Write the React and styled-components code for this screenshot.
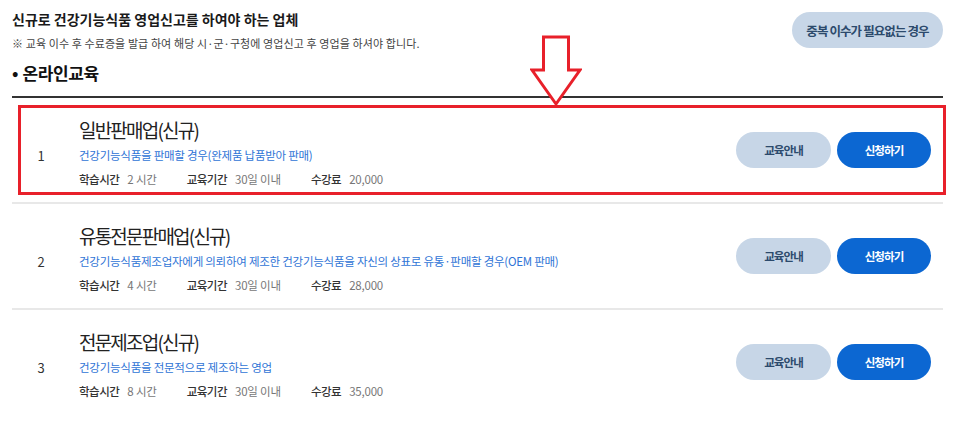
import React from 'react';
import styled, { createGlobalStyle } from 'styled-components';

const GlobalStyle = createGlobalStyle`
  body {
    margin: 0;
    background: #fff;
    font-family: "Noto Sans CJK KR", "Noto Sans", sans-serif;
    color: #222;
  }
`;

const courses = [
  {
    no: 1,
    title: '일반판매업(신규)',
    desc: '건강기능식품을 판매할 경우(완제품 납품받아 판매)',
    hours: '2 시간',
    period: '30일 이내',
    fee: '20,000',
    highlight: true,
  },
  {
    no: 2,
    title: '유통전문판매업(신규)',
    desc: '건강기능식품제조업자에게 의뢰하여 제조한 건강기능식품을 자신의 상표로 유통·판매할 경우(OEM 판매)',
    hours: '4 시간',
    period: '30일 이내',
    fee: '28,000',
  },
  {
    no: 3,
    title: '전문제조업(신규)',
    desc: '건강기능식품을 전문적으로 제조하는 영업',
    hours: '8 시간',
    period: '30일 이내',
    fee: '35,000',
  },
];

const Page = styled.div`
  position: relative;
  padding: 8px 23px 0 12px;
`;

const Header = styled.div`
  display: flex;
  justify-content: space-between;
  align-items: flex-start;
`;

const Title = styled.h2`
  margin: 0;
  font-size: 14px;
  line-height: 22px;
  font-weight: 700;
  color: #1a1a1a;
`;

const Note = styled.p`
  margin: 4px 0 0;
  font-size: 11px;
  line-height: 18px;
  letter-spacing: 0.1px;
  color: #444;
`;

const Pill = styled.button`
  height: 36px;
  border: 0;
  border-radius: 18px;
  font-family: inherit;
  font-weight: 700;
  cursor: pointer;
  background: ${p => (p.$primary ? '#0c67d2' : '#c7d6e7')};
  color: ${p => (p.$primary ? '#fff' : '#2c4a6c')};
  font-size: ${p => (p.$big ? '12.5px' : '11.5px')};
  letter-spacing: -0.9px;
  width: ${p => p.$w}px;
  padding: 0;
`;

const DupButton = styled(Pill)`
  margin-top: 4px;
`;

const Section = styled.h3`
  margin: 8px 0 0;
  font-size: 17px;
  line-height: 26px;
  font-weight: 700;
  letter-spacing: -0.4px;
  color: #111;
  &::before {
    content: '•';
    margin-right: 4px;
    letter-spacing: 0;
  }
`;

const List = styled.ul`
  list-style: none;
  margin: 10px 0 0;
  padding: 0;
  border-top: 2px solid #333;
`;

const Row = styled.li`
  position: relative;
  display: flex;
  align-items: center;
  height: 104px;
  border-bottom: 2px solid #e8e8e8;
  &:last-child {
    border-bottom-color: transparent;
  }
`;

const Highlight = styled.div`
  position: absolute;
  left: 6px;
  right: -3px;
  top: 7px;
  height: 90px;
  box-sizing: border-box;
  border: 3px solid #e8202a;
  pointer-events: none;
`;

const Num = styled.div`
  width: 58px;
  margin-right: 9px;
  padding-top: 10px;
  text-align: center;
  font-size: 13px;
  color: #333;
`;

const Info = styled.div`
  flex: 1;
  padding-top: 8px;
`;

const CourseName = styled.div`
  font-size: 19px;
  line-height: 26px;
  letter-spacing: -1.8px;
  color: #222;
`;

const Desc = styled.div`
  font-size: 11.5px;
  line-height: 24px;
  letter-spacing: -0.25px;
  color: #2f74d6;
`;

const Meta = styled.div`
  display: flex;
  gap: 30px;
  font-size: 11.5px;
  line-height: 24px;
  letter-spacing: -0.5px;
`;

const MetaItem = styled.span`
  display: flex;
  gap: 8px;
`;

const Label = styled.span`
  color: #333;
  font-weight: 500;
`;

const Value = styled.span`
  color: #777;
  letter-spacing: -0.2px;
`;

const Actions = styled.div`
  display: flex;
  gap: 6px;
  margin-right: 12px;
`;

const Arrow = styled.svg`
  position: absolute;
  left: 530px;
  top: 35px;
`;

export default function App() {
  return (
    <>
      <GlobalStyle />
      <Page>
        <Header>
          <div>
            <Title>신규로 건강기능식품 영업신고를 하여야 하는 업체</Title>
            <Note>※ 교육 이수 후 수료증을 발급 하여 해당 시·군·구청에 영업신고 후 영업을 하셔야 합니다.</Note>
          </div>
          <DupButton $w={151} $big>중복 이수가 필요없는 경우</DupButton>
        </Header>
        <Section>온라인교육</Section>
        <List>
          {courses.map(c => (
            <Row key={c.no}>
              <Num>{c.no}</Num>
              <Info>
                <CourseName>{c.title}</CourseName>
                <Desc>{c.desc}</Desc>
                <Meta>
                  <MetaItem><Label>학습시간</Label><Value>{c.hours}</Value></MetaItem>
                  <MetaItem><Label>교육기간</Label><Value>{c.period}</Value></MetaItem>
                  <MetaItem><Label>수강료</Label><Value>{c.fee}</Value></MetaItem>
                </Meta>
              </Info>
              <Actions>
                <Pill $w={95}>교육안내</Pill>
                <Pill $w={94} $primary>신청하기</Pill>
              </Actions>
              {c.highlight && <Highlight />}
            </Row>
          ))}
        </List>
        <Arrow width="52" height="72" viewBox="0 0 52 72">
          <polygon
            points="13.5,2 38.5,2 38.5,35 50,35 26,69 2,35 13.5,35"
            fill="#fff"
            stroke="#e8202a"
            strokeWidth="3"
            strokeLinejoin="miter"
          />
        </Arrow>
      </Page>
    </>
  );
}
